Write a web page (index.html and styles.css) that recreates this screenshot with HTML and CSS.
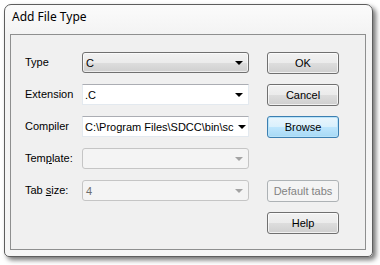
FILE: index.html
```html
<!DOCTYPE html>
<html lang="en">
<head>
  <meta charset="UTF-8" />
  <title>Add File Type</title>
  <link rel="stylesheet" href="styles.css">
</head>
<body>
  <div class="window">
    <div class="titlebar">Add File Type</div>
    <div class="client">
      <div class="form">
        <label class="lbl">Type</label>
        <div class="combo list"><span class="val">C</span><span class="arrow"></span></div>
        <button class="btn">OK</button>

        <label class="lbl">Extension</label>
        <div class="combo edit"><span class="val">.C</span><span class="arrow"></span></div>
        <button class="btn">Cancel</button>

        <label class="lbl">Compiler</label>
        <div class="combo edit"><span class="val">C:\Program Files\SDCC\bin\sc</span><span class="arrow"></span></div>
        <button class="btn focus">Browse</button>

        <label class="lbl">Tem<u>p</u>late:</label>
        <div class="combo off"><span class="val"></span><span class="arrow"></span></div>
        <span></span>

        <label class="lbl">Tab <u>s</u>ize:</label>
        <div class="combo off"><span class="val">4</span><span class="arrow"></span></div>
        <button class="btn disabled">Default tabs</button>

        <span></span>
        <span></span>
        <button class="btn">Help</button>
      </div>
    </div>
  </div>
</body>
</html>
```

FILE: styles.css
```css
body {
  margin: 0;
  width: 380px;
  height: 265px;
  background: #fff;
  overflow: hidden;
  font-family: "Liberation Sans", Arial, sans-serif;
}
.window {
  margin: 4px 0 0 4px;
  width: 367px;
  height: 251px;
  border: 1px solid #5e5e5e;
  border-radius: 7px 7px 5px 5px;
  background: linear-gradient(to bottom, #fbfbfb, #f3f3f3 30px, #f6f6f6);
  box-shadow: 3px 3px 5px rgba(0, 0, 0, 0.55);
  display: flex;
  flex-direction: column;
}
.titlebar {
  height: 29px;
  padding-left: 7px;
  font-family: "Noto Sans", sans-serif;
  font-size: 12px;
  line-height: 24px;
  color: #000;
}
.client {
  margin: 0 6px 6px 5px;
  flex: 1;
  border: 1px solid #8e8f8f;
  background: #f0f0f0;
}
.form {
  display: grid;
  grid-template-columns: 57px 185px 72px;
  grid-auto-rows: 21px;
  row-gap: 11px;
  padding: 17px 0 0 14px;
  font-size: 11px;
}
.lbl {
  line-height: 20px;
  color: #000;
}
.combo {
  width: 167px;
  height: 21px;
  box-sizing: border-box;
  display: flex;
  align-items: center;
  overflow: hidden;
}
.val {
  flex: 1;
  white-space: nowrap;
  padding-left: 3px;
}
.arrow {
  width: 0;
  height: 0;
  margin: 0 5px 0 4px;
  border-left: 4px solid transparent;
  border-right: 4px solid transparent;
  border-top: 4px solid #000;
}
.list {
  border: 1px solid #707070;
  border-radius: 3px;
  background: linear-gradient(to bottom, #f2f2f2 0%, #ebebeb 50%, #dddddd 51%, #cfcfcf 100%);
  box-shadow: inset 0 0 0 1px rgba(255, 255, 255, 0.6);
}
.edit {
  border: 1px solid #e3e9ef;
  border-top-color: #abadb3;
  background: #fff;
}
.edit .val {
  padding-left: 2px;
}
.off {
  border: 1px solid #c5c5c5;
  border-radius: 3px;
  background: #f4f4f4;
  color: #6d6d6d;
}
.off .arrow {
  border-top-color: #a3a3a3;
}
.btn {
  width: 72px;
  height: 22px;
  padding: 0;
  font-family: "Liberation Sans", Arial, sans-serif;
  font-size: 11px;
  color: #000;
  border: 1px solid #707070;
  border-radius: 3px;
  background: linear-gradient(to bottom, #f2f2f2 0%, #ebebeb 50%, #dddddd 51%, #cfcfcf 100%);
  box-shadow: inset 0 0 0 1px rgba(255, 255, 255, 0.7);
}
.btn.focus {
  border-color: #3c7fb1;
  background: linear-gradient(to bottom, #eaf6fd 0%, #d9f0fc 50%, #bee6fd 51%, #a7d9f5 100%);
  box-shadow: inset 0 0 0 1px #b9e3f9;
}
.btn.disabled {
  border-color: #adb2b5;
  background: #f4f4f4;
  color: #838383;
  box-shadow: none;
}
```
